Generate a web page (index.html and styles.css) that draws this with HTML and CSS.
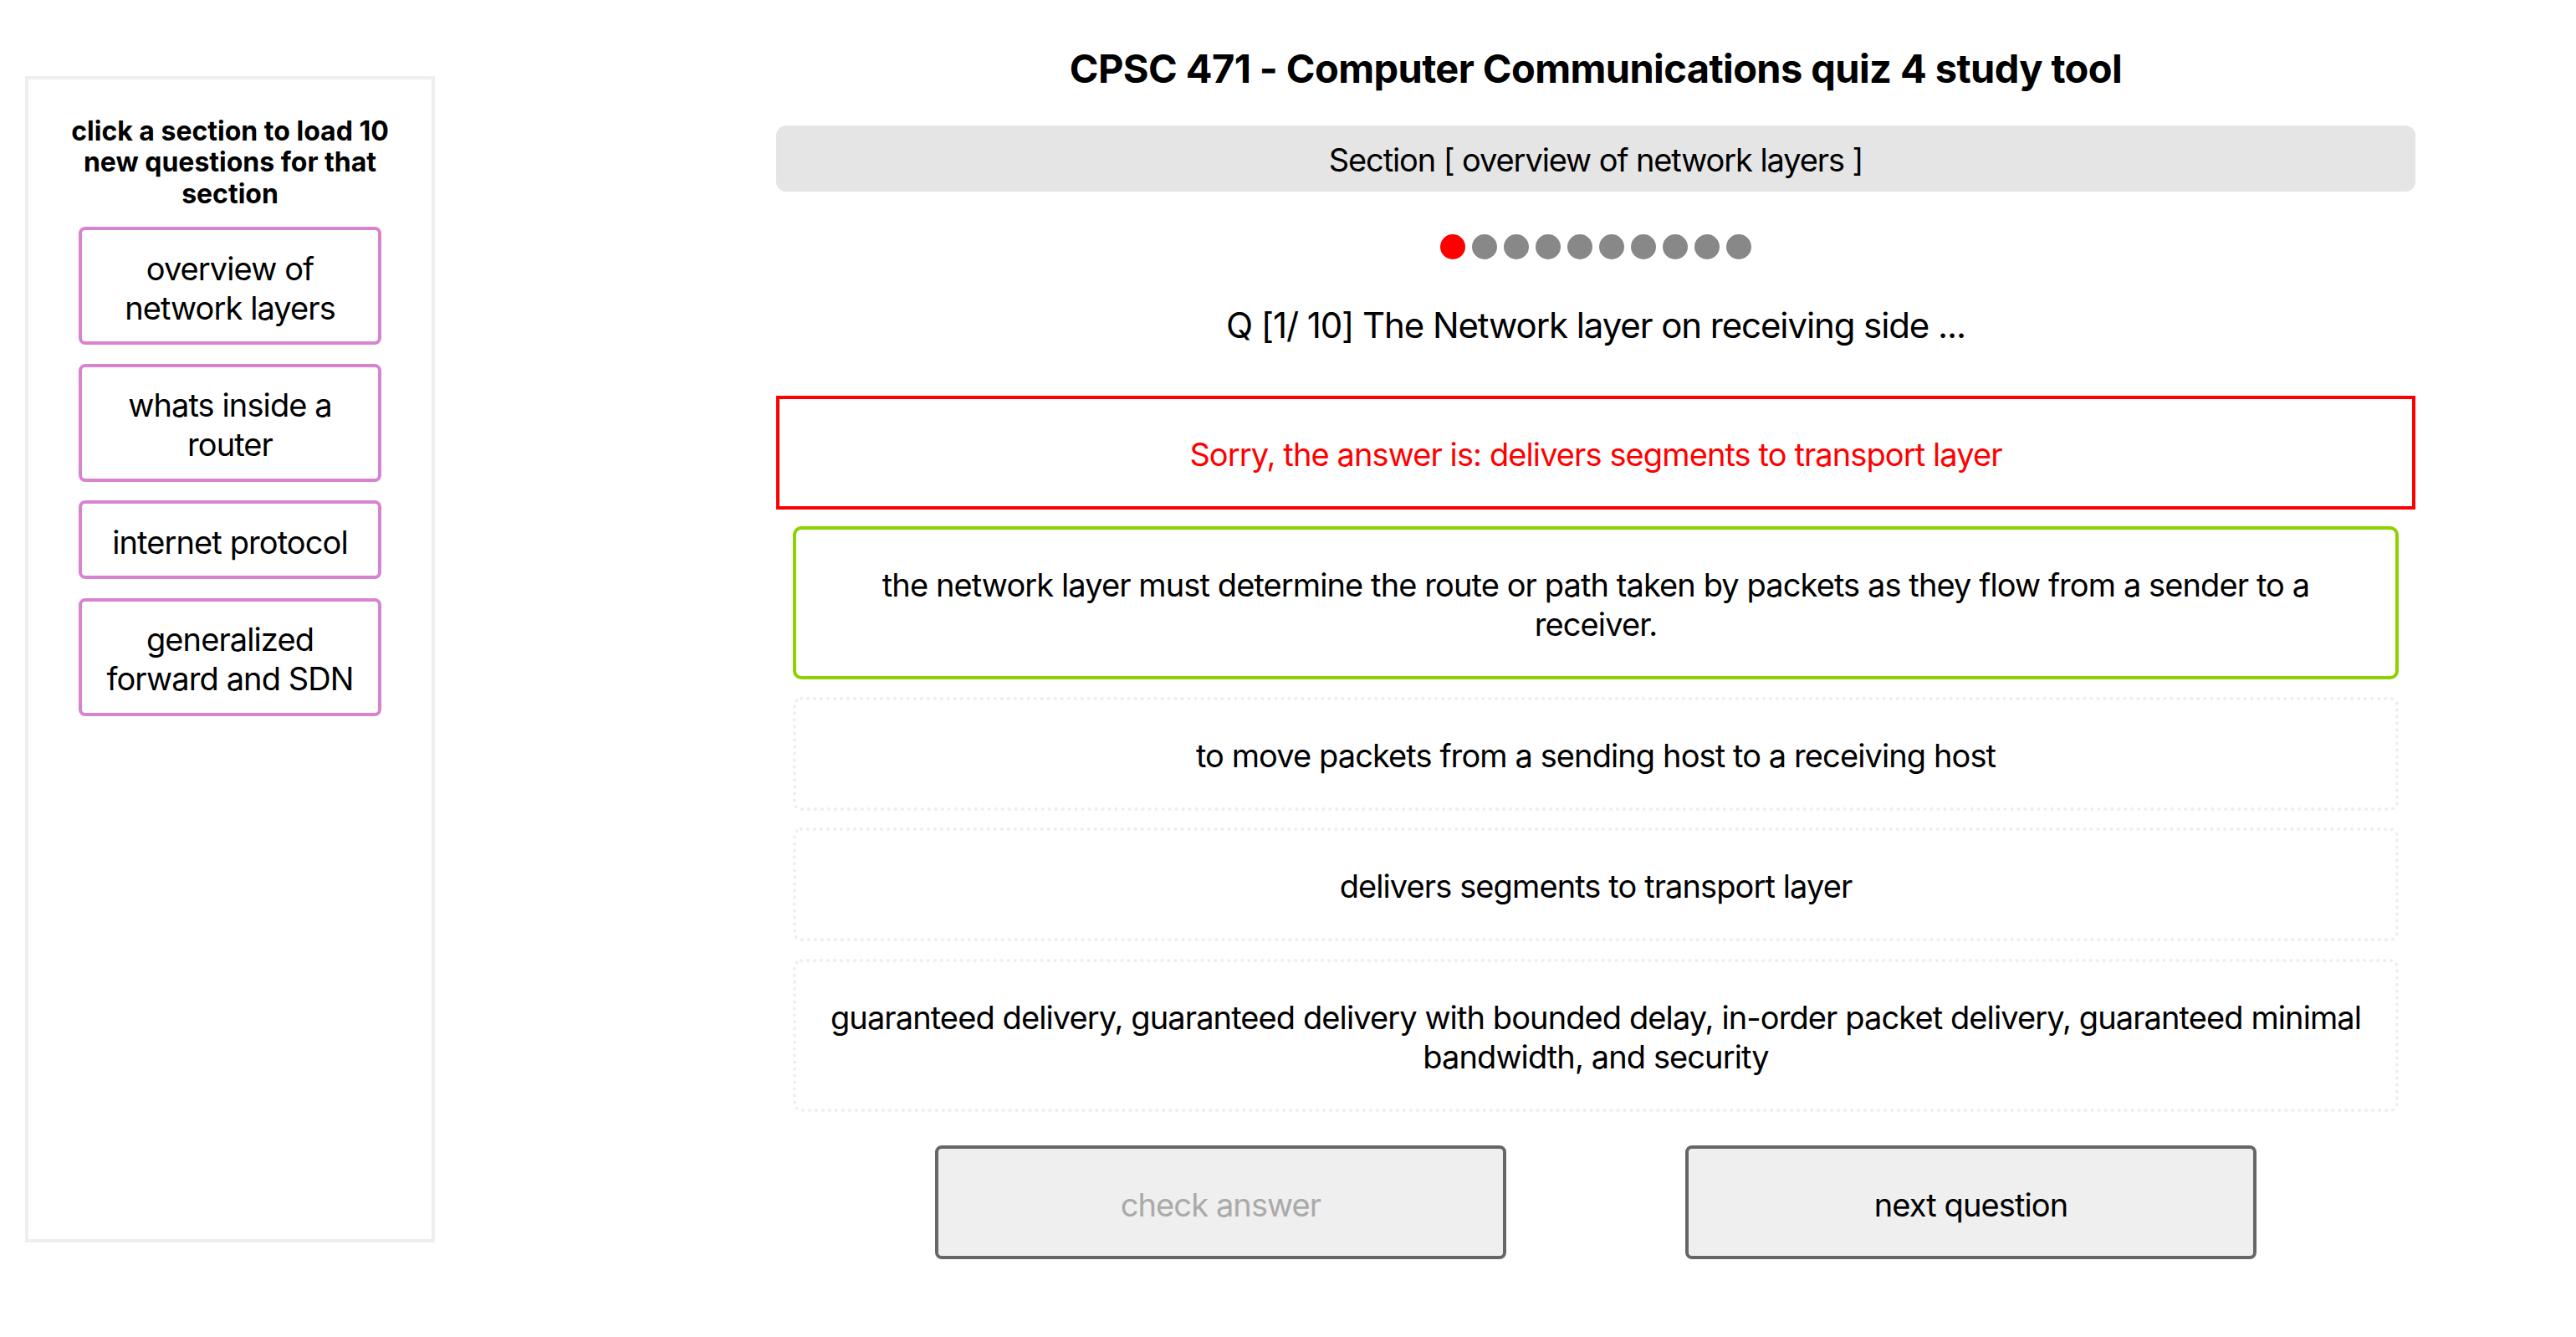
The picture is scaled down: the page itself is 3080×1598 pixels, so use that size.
FILE: index.html
```html
<!DOCTYPE html>
<html lang="en">
<head>
<meta charset="utf-8">
<title>CPSC 471 - Computer Communications quiz 4 study tool</title>
<link rel="stylesheet" href="styles.css">
</head>
<body>
<div class="app">
  <aside class="sidebar">
    <p class="sidebar-title">click a section to load 10 new questions for that section</p>
    <div class="section-list">
      <button class="section-btn">overview of network layers</button>
      <button class="section-btn">whats inside a router</button>
      <button class="section-btn">internet protocol</button>
      <button class="section-btn">generalized forward and SDN</button>
    </div>
  </aside>
  <main class="main">
    <h1 class="title">CPSC 471 - Computer Communications quiz 4 study tool</h1>
    <div class="section-bar">Section [ overview of network layers ]</div>
    <div class="dots">
      <span class="dot dot-current"></span>
      <span class="dot"></span>
      <span class="dot"></span>
      <span class="dot"></span>
      <span class="dot"></span>
      <span class="dot"></span>
      <span class="dot"></span>
      <span class="dot"></span>
      <span class="dot"></span>
      <span class="dot"></span>
    </div>
    <p class="question">Q [1/ 10] The Network layer on receiving side ...</p>
    <div class="feedback">Sorry, the answer is: delivers segments to transport layer</div>
    <div class="options">
      <div class="option option-selected">the network layer must determine the route or path taken by packets as they flow from a sender to a receiver.</div>
      <div class="option">to move packets from a sending host to a receiving host</div>
      <div class="option">delivers segments to transport layer</div>
      <div class="option">guaranteed delivery, guaranteed delivery with bounded delay, in-order packet delivery, guaranteed minimal bandwidth, and security</div>
    </div>
    <div class="actions">
      <button class="action-btn action-disabled">check answer</button>
      <button class="action-btn">next question</button>
    </div>
  </main>
</div>
</body>
</html>
```
FILE: styles.css
```css
html, body {
  margin: 0;
  padding: 0;
  background: #fff;
}
body {
  font-family: "Inter", "Liberation Sans", sans-serif;
  color: #000;
}
.app {
  display: flex;
  align-items: flex-start;
}
.sidebar {
  box-sizing: border-box;
  width: 490px;
  height: 1394px;
  margin: 91px 0 0 30px;
  border: 4px solid #eeeeee;
  padding-top: 42.6px;
  display: flex;
  flex-direction: column;
  align-items: center;
}
.sidebar-title {
  margin: 0;
  width: 420px;
  font-size: 32px;
  line-height: 37.5px;
  font-weight: 700;
  text-align: center;
}
.section-list {
  margin-top: 21px;
  display: flex;
  flex-direction: column;
  gap: 22.5px;
}
.section-btn {
  box-sizing: border-box;
  width: 362px;
  padding: 22.5px 16px 16.5px;
  border: 4px solid #d883d0;
  border-radius: 8px;
  background: #fff;
  font-family: inherit;
  font-size: 38px;
  letter-spacing: -0.9px;
  line-height: 47px;
  color: #000;
  text-align: center;
}
.main {
  flex: 1;
  padding-left: 216px;
  display: flex;
  flex-direction: column;
  align-items: center;
}
.title {
  margin: 53px 0 0;
  font-size: 47px;
  letter-spacing: -0.6px;
  line-height: 58px;
  font-weight: 700;
  text-align: center;
}
.section-bar {
  margin-top: 39px;
  width: 1960px;
  height: 79px;
  border-radius: 12px;
  background: #e5e5e5;
  display: flex;
  align-items: center;
  justify-content: center;
  font-size: 38px;
  letter-spacing: -1.1px;
  line-height: 48px;
  padding-top: 2px;
  box-sizing: border-box;
}
.dots {
  margin-top: 51px;
  display: flex;
  gap: 8px;
}
.dot {
  width: 30px;
  height: 30px;
  border-radius: 50%;
  background: #888888;
}
.dot-current {
  background: #ff0000;
}
.question {
  margin: 54.5px 0 0;
  font-size: 42px;
  letter-spacing: -1.1px;
  line-height: 48px;
  text-align: center;
}
.feedback {
  box-sizing: border-box;
  margin-top: 60.5px;
  width: 1960px;
  padding: 43px 34px 38px;
  border: 4px solid #ff0000;
  color: #ff0000;
  font-size: 38px;
  letter-spacing: -0.9px;
  line-height: 47px;
  text-align: center;
}
.options {
  margin-top: 20px;
  width: 1920px;
  display: flex;
  flex-direction: column;
  gap: 20.5px;
}
.option {
  box-sizing: border-box;
  padding: 43px 34px 38px;
  border: 4px dotted #eeeeee;
  border-radius: 10px;
  font-size: 38px;
  letter-spacing: -0.9px;
  line-height: 47px;
  text-align: center;
}
.option-selected {
  border: 4px solid #8cd200;
}
.actions {
  margin-top: 40.5px;
  display: flex;
  gap: 214px;
}
.action-btn {
  box-sizing: border-box;
  width: 683px;
  padding: 42.5px 10px 37.5px;
  border: 4px solid #666666;
  border-radius: 8px;
  background: #efefef;
  font-family: inherit;
  font-size: 38px;
  letter-spacing: -0.9px;
  line-height: 48px;
  color: #000;
}
.action-disabled {
  color: #aaaaaa;
}
```
